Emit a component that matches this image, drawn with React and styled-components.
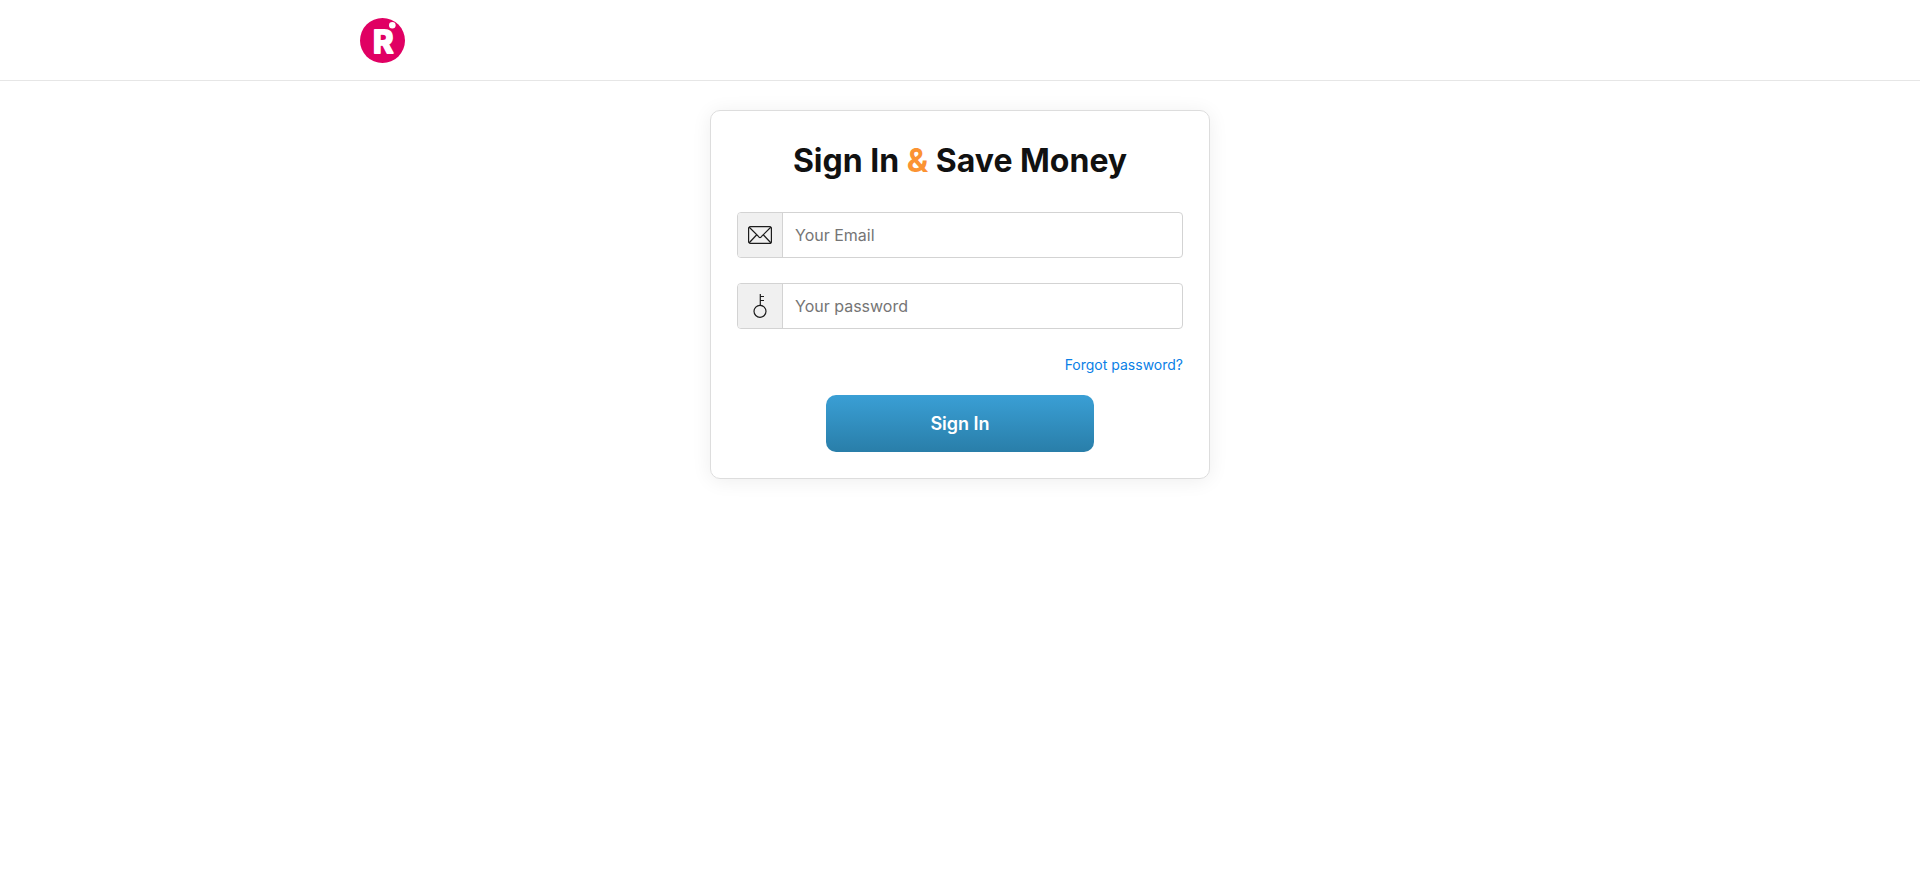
import { useState } from "react";
import styled, { createGlobalStyle } from "styled-components";

const GlobalStyle = createGlobalStyle`
  * {
    box-sizing: border-box;
  }
  body {
    margin: 0;
    background-color: white;
    color: #111;
    font-family: Inter, "Liberation Sans", sans-serif;
  }
`;

const Header = styled.header`
  border-bottom: 1px solid #e6e6e6;
`;

const Container = styled.div`
  max-width: 1200px;
  height: 80px;
  margin: 0 auto;
  display: flex;
  align-items: center;
`;

const LogoLink = styled.a`
  display: flex;
`;

const LogoLetter = styled.text`
  font-family: Inter, sans-serif;
  font-size: 31px;
  font-weight: 700;
  fill: white;
  stroke: white;
  stroke-width: 2px;
  stroke-linejoin: round;
`;

const Card = styled.main`
  max-width: 500px;
  margin: 29px auto;
  padding: 26px;
  border: 1px solid #ddd;
  border-radius: 10px;
  box-shadow: 0 2px 20px rgba(0, 0, 0, 0.07);
`;

const Title = styled.h1`
  margin: 0 0 28px;
  font-size: 32px;
  line-height: 47px;
  font-weight: 700;
  text-align: center;

  span {
    color: #fb9333;
  }
`;

const Field = styled.div`
  display: flex;
  height: 46px;
  margin-bottom: 25px;
  border: 1px solid #d3d3d3;
  border-radius: 4px;
  overflow: hidden;
`;

const FieldLabel = styled.label`
  width: 45px;
  display: flex;
  align-items: center;
  justify-content: center;
  flex-shrink: 0;
  background-color: #f0f0f0;
  border-right: 1px solid #d3d3d3;
`;

const Input = styled.input`
  flex: 1;
  min-width: 0;
  padding: 0 12px;
  border: 0;
  outline: none;
  background-color: transparent;
  font-family: inherit;
  font-size: 16px;

  &::placeholder {
    color: #757575;
  }
`;

const ForgotRow = styled.div`
  margin-bottom: 20px;
  font-size: 14px;
  line-height: 21px;
  text-align: right;
`;

const ForgotLink = styled.a`
  color: #0a80e6;
  text-decoration: none;
`;

const Button = styled.button`
  display: block;
  width: 60%;
  height: 57px;
  margin: 0 auto;
  border: 0;
  border-radius: 10px;
  background: linear-gradient(#3a9fd5, #297ea9);
  color: white;
  font-family: inherit;
  font-size: 18px;
  font-weight: 600;
  cursor: pointer;
`;

const Logo = () => (
  <svg width="45" height="45" viewBox="0 0 45 45" aria-hidden="true">
    <circle cx="22.5" cy="22.5" r="22.5" fill="#e00063" />
    <LogoLetter x="13" y="35">R</LogoLetter>
    <circle cx="32.3" cy="7.3" r="3.3" fill="white" />
  </svg>
);

const MailIcon = () => (
  <svg width="24" height="18" viewBox="0 0 24 18" fill="none" stroke="#1c1c1c" strokeWidth="1.2" aria-hidden="true">
    <rect x="0.6" y="0.6" width="22.8" height="16.8" rx="2" />
    <path d="M1 1l9.2 9.2c1.2 1.9 2.4 1.9 3.6 0L23 1M1 17l7.5-8M23 17l-7.5-8" />
  </svg>
);

const KeyIcon = () => (
  <svg width="14" height="24" viewBox="0 0 14 24" fill="none" stroke="#1c1c1c" strokeWidth="1.2" aria-hidden="true">
    <circle cx="7" cy="17.3" r="6" />
    <path d="M7.3 0v11.3M7.3 2.5h3.7M7.3 6.5h3.7" />
  </svg>
);

const App = () => {
  const [email, setEmail] = useState("");
  const [password, setPassword] = useState("");

  return (
    <>
      <GlobalStyle />
      <Header>
        <Container>
          <LogoLink href="/" aria-label="Home">
            <Logo />
          </LogoLink>
        </Container>
      </Header>

      <Card>
        <Title>
          Sign In <span>&amp;</span> Save Money
        </Title>
        <form onSubmit={(e) => e.preventDefault()}>
          <Field>
            <FieldLabel htmlFor="email" aria-label="Email">
              <MailIcon />
            </FieldLabel>
            <Input
              id="email"
              type="email"
              placeholder="Your Email"
              value={email}
              onChange={(e) => setEmail(e.target.value)}
            />
          </Field>
          <Field>
            <FieldLabel htmlFor="password" aria-label="Password">
              <KeyIcon />
            </FieldLabel>
            <Input
              id="password"
              type="password"
              placeholder="Your password"
              value={password}
              onChange={(e) => setPassword(e.target.value)}
            />
          </Field>
          <ForgotRow>
            <ForgotLink href="/forgot-password">Forgot password?</ForgotLink>
          </ForgotRow>
          <Button type="submit">Sign In</Button>
        </form>
      </Card>
    </>
  );
};

export default App;
